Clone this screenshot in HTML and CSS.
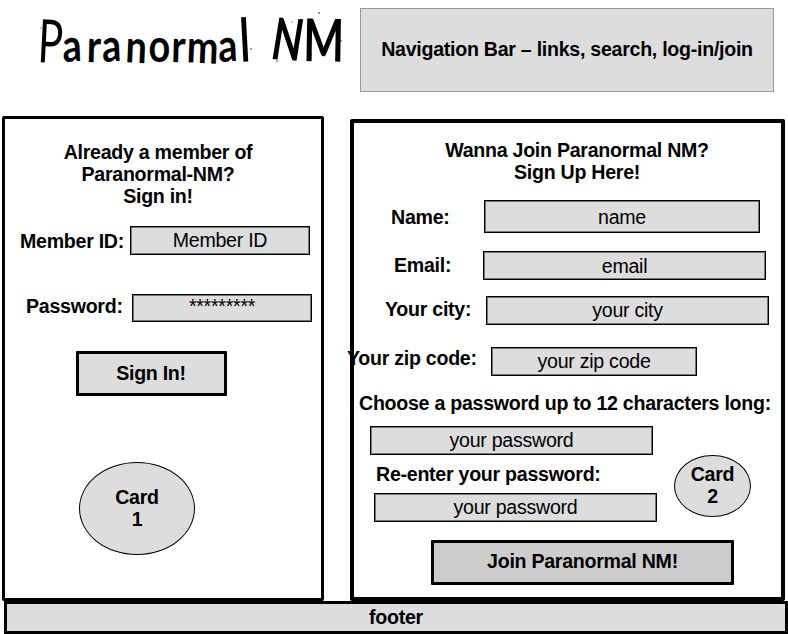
FILE: index.html
```html
<!DOCTYPE html>
<html lang="en">
<head>
<meta charset="utf-8">
<title>Paranormal NM</title>
<link rel="stylesheet" href="styles.css">
</head>
<body>
<header class="header">
  <svg class="logo" width="360" height="100" viewBox="0 0 360 100" role="img" aria-label="Paranormal NM">
    <g class="logo-text">
      <text class="thin" transform="translate(37 62) rotate(3) scale(.69 1)" font-size="60">P</text>
      <text transform="translate(63 62) scale(.9 1.08)" x="0 26 44 69 95 120 137 173" font-size="42" rotate="-3 2 -3 3 0 2 3 -3">aranorma</text>
      <text transform="translate(241 62) rotate(-3) scale(.65 1)" font-size="60">l</text>
      <text class="caps" transform="translate(271 59) rotate(4) scale(.73 1)" font-size="58">N</text>
      <text transform="translate(303 61) rotate(1) scale(.73 1)" font-size="59">M</text>
    </g>
    <g class="specks">
      <circle cx="41" cy="28" r=".6"/><circle cx="251" cy="49" r=".7"/><circle cx="292" cy="22" r=".6"/>
      <circle cx="277" cy="61" r=".7"/><circle cx="319" cy="13" r=".8"/><circle cx="311" cy="55" r=".7"/><circle cx="341" cy="41" r=".7"/>
    </g>
  </svg>
  <nav class="nav">Navigation Bar – links, search, log-in/join</nav>
</header>
<main class="main">
  <section class="panel signin">
    <h2 class="title">Already a member of<br>Paranormal-NM?<br>Sign in!</h2>
    <div class="row row-member"><span class="label">Member ID:</span><span class="field">Member ID</span></div>
    <div class="row row-pass"><span class="label">Password:</span><span class="field">*********</span></div>
    <div class="button signin-button">Sign In!</div>
    <div class="card card-one">Card<br>1</div>
  </section>
  <section class="panel signup">
    <h2 class="title">Wanna Join Paranormal NM?<br>Sign Up Here!</h2>
    <div class="row row-name"><span class="label">Name:</span><span class="field">name</span></div>
    <div class="row row-email"><span class="label">Email:</span><span class="field">email</span></div>
    <div class="row row-city"><span class="label">Your city:</span><span class="field">your city</span></div>
    <div class="row row-zip"><span class="label">Your zip code:</span><span class="field">your zip code</span></div>
    <div class="label choose">Choose a password up to 12 characters long:</div>
    <div class="field choose-field">your password</div>
    <div class="confirm">
      <div class="confirm-entry">
        <div class="label again">Re-enter your password:</div>
        <div class="field again-field">your password</div>
      </div>
      <div class="card card-two">Card<br>2</div>
    </div>
    <div class="button join-button">Join Paranormal NM!</div>
  </section>
</main>
<footer class="footer">footer</footer>
</body>
</html>
```
FILE: styles.css
```css
* { box-sizing: border-box; }
body {
  margin: 0;
  width: 788px;
  height: 634px;
  overflow: hidden;
  background: #fff;
  color: #000;
  font: bold 19.6px/22px "Liberation Sans", Arial, sans-serif;
  letter-spacing: -.27px;
}
.header { display: flex; height: 116px; }
.logo { flex: none; letter-spacing: 0; }
.logo-text { font-family: Lato, "Liberation Sans", sans-serif; font-weight: 700; }
.thin { font-weight: 400; }
.caps { font-style: italic; }
.nav {
  width: 414px;
  height: 84px;
  margin-top: 8px;
  border: 1px solid #999;
  background: #ddd;
  line-height: 81px;
  text-align: center;
  white-space: nowrap;
}
.main { display: flex; height: 485px; padding-left: 2px; }
.panel { flex: none; background: #fff; }
.signin { width: 322px; height: 485px; border: 3px solid #000; border-radius: 2px; padding-top: 22px; }
.signup { width: 435px; height: 482px; margin: 3px 0 0 26px; border: 4px solid #000; border-radius: 2px; padding-top: 16px; }
.title { margin: 0; font: inherit; text-align: center; }
.signin .title { padding-right: 10px; }
.signup .title { padding-left: 19px; }
.row { display: flex; align-items: flex-start; }
.label { flex: none; height: 22px; white-space: nowrap; }
.field {
  display: block;
  flex: none;
  height: 29px;
  border: 1px solid #000;
  box-shadow: inset 0 0 0 1px #777;
  background: #ddd;
  font-weight: normal;
  line-height: 27px;
  text-align: center;
}
.row-member { margin: 19px 0 0 15px; }
.row-member .label { width: 110px; margin-top: 4px; }
.row-member .field { width: 180px; }
.row-pass { margin: 39px 0 0 21px; }
.row-pass .label { width: 106px; margin-top: 1px; }
.row-pass .field { width: 180px; height: 28px; line-height: 22px; }
.button { display: flex; align-items: center; justify-content: center; border: 3px solid #000; border-radius: 1px; background: #ddd; }
.signin-button { width: 151px; height: 45px; margin: 29px 0 0 71px; padding: 0 1px 2px 0; }
.card { border: 1.5px solid #000; border-radius: 50%; background: #ddd; text-align: center; }
.card-one { width: 116px; height: 93px; margin: 66px 0 0 74px; padding-top: 23px; }
.row-name { margin: 17px 0 0 37px; }
.row-name .label { width: 93px; margin-top: 6px; }
.row-name .field { width: 276px; height: 33px; line-height: 32px; }
.row-email { margin: 18px 0 0 40px; }
.row-email .label { width: 89px; margin-top: 3px; }
.row-email .field { width: 283px; height: 29px; line-height: 28px; }
.row-city { margin: 16px 0 0 31px; }
.row-city .label { width: 101px; margin-top: 2px; }
.row-city .field { width: 283px; height: 29px; }
.row-zip { margin: 22px 0 0 -7px; position: relative; }
.row-zip .label { width: 144px; }
.row-zip .field { width: 206px; }
.choose { margin: 16px 0 0 5px; }
.choose-field { width: 283px; height: 29px; margin: 12px 0 0 16px; }
.confirm { display: flex; height: 67px; padding-left: 20px; }
.confirm-entry { width: 300px; padding-top: 8px; }
.again { margin-left: 2px; }
.again-field { width: 283px; margin-top: 8px; line-height: 26px; }
.card-two { width: 77px; height: 62px; padding-top: 7px; }
.join-button { width: 303px; height: 45px; margin: 18px 0 0 77px; padding: 0 0 4px; background: #ccc; }
.footer {
  height: 33px;
  margin-left: 4px;
  border: 3px solid #000;
  background: #ddd;
  line-height: 27px;
  text-align: center;
}
```
